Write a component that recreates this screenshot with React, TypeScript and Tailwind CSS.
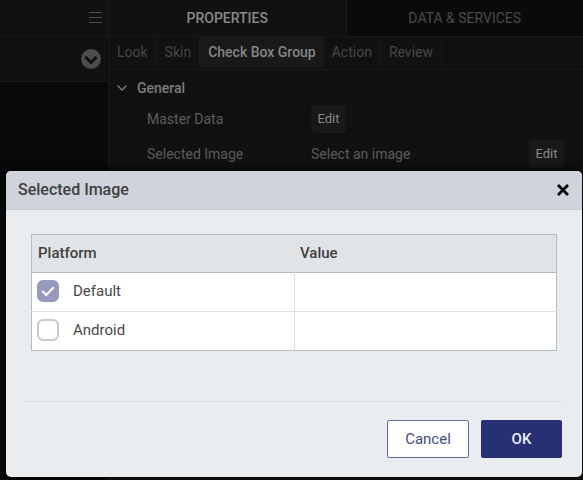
import { useState } from 'react'

const TABS = ['Look', 'Skin', 'Check Box Group', 'Action', 'Review']

function EditButton({ label }: { label: string }) {
  return (
    <button
      type="button"
      aria-label={label}
      className="h-7 w-[35px] rounded bg-[#191919] text-[13px] text-[#8a8a8a]"
    >
      Edit
    </button>
  )
}

function Sidebar() {
  return (
    <aside className="w-[109px] shrink-0 border-r border-[#1a1a1a] bg-[#090909]">
      <div className="flex h-[37px] items-center justify-end border-b border-[#1a1a1a] bg-[#111111] pr-[6px]">
        <button type="button" aria-label="Menu" className="text-[#4d4d4d]">
          <svg width="13" height="12" viewBox="0 0 13 12" stroke="currentColor" strokeWidth="1">
            <path d="M0 .5h13M0 5.5h13M0 10.5h13" />
          </svg>
        </button>
      </div>
      <div className="mr-px flex h-[45px] items-center justify-end border-b border-[#1a1a1a] bg-[#111111] pr-[6px]">
        <button type="button" aria-label="Expand" className="text-[#4d4d4d]">
          <svg width="20" height="20" viewBox="0 0 20 20" fill="none">
            <circle cx="10" cy="10" r="10" fill="currentColor" />
            <path d="M4.5 8 10 13.5 15.5 8" stroke="#0e0e0e" strokeWidth="3" />
          </svg>
        </button>
      </div>
    </aside>
  )
}

function PropertiesPanel() {
  const [tab, setTab] = useState('Check Box Group')

  return (
    <section className="min-w-0 flex-1 bg-[#111111]">
      <div className="flex h-[37px] border-b border-[#1a1a1a] text-sm font-medium">
        <button type="button" className="flex-1 border-r border-[#1a1a1a] text-[#8a8a8a]">PROPERTIES</button>
        <button type="button" className="flex-1 bg-[#0a0a0a] font-normal text-[#4a4a4a]">DATA &amp; SERVICES</button>
      </div>

      <div className="flex h-[33px] items-start border-b border-[#1a1a1a] text-sm">
        {TABS.map(t => (
          <button
            key={t}
            type="button"
            onClick={() => setTab(t)}
            className={
              t === tab
                ? 'h-[30px] bg-[#191919] px-2 font-medium text-[#858585]'
                : 'h-[30px] border-r border-[#1a1a1a] px-2 text-[#464646]'
            }
          >{t}</button>
        ))}
      </div>

      <div className="pr-[19px] text-sm text-[#5c5c5c]">
        <h2 className="flex h-[35px] items-center gap-[10px] pl-2 font-medium text-[#7c7c7c]">
          <svg width="10" height="6" viewBox="0 0 10 6" fill="none" stroke="currentColor" strokeWidth="1.3">
            <path d="M.5 .5 5 5 9.5 .5" />
          </svg>
          General
        </h2>
        <div className="flex flex-col gap-[7px] pl-[38px]">
          <div className="flex h-7 items-center">
            <span className="w-[164px]">Master Data</span>
            <EditButton label="Edit master data" />
          </div>
          <div className="flex h-7 items-center">
            <span className="w-[164px]">Selected Image</span>
            <span className="flex-1">Select an image</span>
            <EditButton label="Edit selected image" />
          </div>
        </div>
      </div>
    </section>
  )
}

function PlatformRow({ name, checked, onToggle }: { name: string; checked: boolean; onToggle: () => void }) {
  return (
    <tr className="h-[39px] border-t border-[#dddfe1] bg-white">
      <td className="border-r border-[#dddfe1] p-0 pb-[2px] pl-[5px]">
        <label className="flex items-center gap-[14px] text-[#484848]">
          <span className="relative flex">
            <input
              type="checkbox"
              checked={checked}
              onChange={onToggle}
              className="size-[22px] appearance-none rounded-md border-2 border-[#c2cbce] bg-white checked:border-[#9799bd] checked:bg-[#9799bd]"
            />
            {checked && (
              <svg
                className="pointer-events-none absolute inset-0"
                width="22" height="22" viewBox="0 0 22 22"
                fill="none" stroke="#fff" strokeWidth="2"
              >
                <path d="M5.3 11 9.2 15 16.7 7.2" />
              </svg>
            )}
          </span>
          {name}
        </label>
      </td>
      <td aria-label={`${name} value`} />
    </tr>
  )
}

function ImageDialog() {
  const [picked, setPicked] = useState<Record<string, boolean>>({ Default: true, Android: false })

  return (
    <div
      role="dialog"
      aria-labelledby="dialog-title"
      className="overflow-hidden rounded-[5px] bg-[#e9edf0] shadow-[0_0_12px_#000]"
    >
      <header className="flex h-[39px] items-center justify-between border-b border-[#c6c9ce] bg-[#cfd3db] pr-[13px] pl-3">
        <h1 id="dialog-title" className="text-base font-medium text-[#3f3f3f]">Selected Image</h1>
        <button type="button" aria-label="Close" className="text-black">
          <svg width="12" height="12" viewBox="0 0 12 12" fill="none" stroke="currentColor" strokeWidth="2.8">
            <path d="M1 1l10 10M11 1 1 11" />
          </svg>
        </button>
      </header>

      <div className="px-[25px] pt-6 pb-[50px]">
        <table className="w-full table-fixed border-collapse border border-[#b3bcc2] text-left text-[15px]">
          <thead>
            <tr className="h-[38px] border-b border-[#b3bcc2] bg-[#e1e4e6] text-[#3f3f3f]">
              <th className="p-0 pl-[6px] font-medium">Platform</th>
              <th className="p-0 pl-[6px] font-medium">Value</th>
            </tr>
          </thead>
          <tbody>
            {Object.keys(picked).map(name => (
              <PlatformRow
                key={name}
                name={name}
                checked={picked[name]}
                onToggle={() => setPicked(p => ({ ...p, [name]: !p[name] }))}
              />
            ))}
          </tbody>
        </table>
      </div>

      <footer className="mr-5 ml-[18px] flex justify-end gap-3 border-t border-[#d8dcde] pt-[18px] pb-[19px] text-[15px]">
        <button type="button" className="h-[38px] w-[82px] rounded-xs border border-[#676c9f] bg-white text-[#464b85]">Cancel</button>
        <button type="button" className="h-[38px] w-[81px] rounded-xs bg-[#283074] font-medium text-[#eceef5]">OK</button>
      </footer>
    </div>
  )
}

export default function App() {
  return (
    <div className="relative flex min-h-screen bg-[#090909] font-[Roboto,sans-serif]">
      <Sidebar />
      <PropertiesPanel />
      <div className="absolute inset-x-0 top-0 pt-[171px] pr-px pl-[6px]">
        <ImageDialog />
      </div>
    </div>
  )
}
